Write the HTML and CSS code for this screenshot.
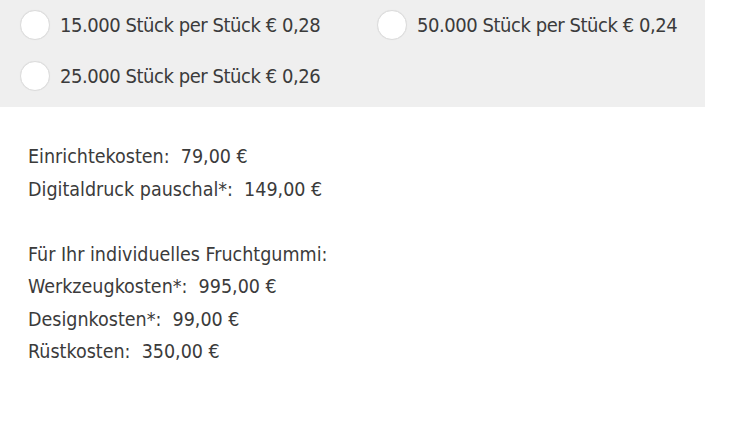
FILE: index.html
```html
<!DOCTYPE html>
<html lang="de">
<head>
    <meta charset="UTF-8">
    <meta name="viewport" content="width=device-width, initial-scale=1.0">
    <title>Staffelpreise</title>
    <link rel="stylesheet" href="styles.css">
</head>
<body>
    <div class="options">
        <label class="option"><span class="radio"></span>15.000 Stück per Stück € 0,28</label>
        <label class="option"><span class="radio"></span>50.000 Stück per Stück € 0,24</label>
        <label class="option"><span class="radio"></span>25.000 Stück per Stück € 0,26</label>
    </div>

    <div class="costs">
        <p>Einrichtekosten:&nbsp; 79,00 €<br>Digitaldruck pauschal*:&nbsp; 149,00 €</p>
        <p>Für Ihr individuelles Fruchtgummi:<br>Werkzeugkosten*:&nbsp; 995,00 €<br>Designkosten*:&nbsp; 99,00 €<br>Rüstkosten:&nbsp; 350,00 €</p>
    </div>
</body>
</html>
```

FILE: styles.css
```css
body { margin: 0; background: #fff; color: #3b3b3b; font-family: "Liberation Sans Narrow", "DejaVu Sans Condensed", "Liberation Sans", sans-serif; }
.options { width: 705px; box-sizing: border-box; background: #efefef; padding: 10px 0 16px 20px; display: grid; grid-template-columns: 357px auto; row-gap: 21px; }
.option { display: flex; align-items: center; gap: 10px; font-size: 20px; letter-spacing: -0.45px; line-height: 30px; }
.radio { width: 28px; height: 28px; border: 1px solid #dcdcdc; border-radius: 50%; background: #fff; flex-shrink: 0; box-shadow: 0 0 1px rgba(0,0,0,0.08); }
.costs { padding: 34px 0 0 28px; font-size: 19.5px; line-height: 32.5px; }
.costs p { margin: 0 0 32.5px; }
```
